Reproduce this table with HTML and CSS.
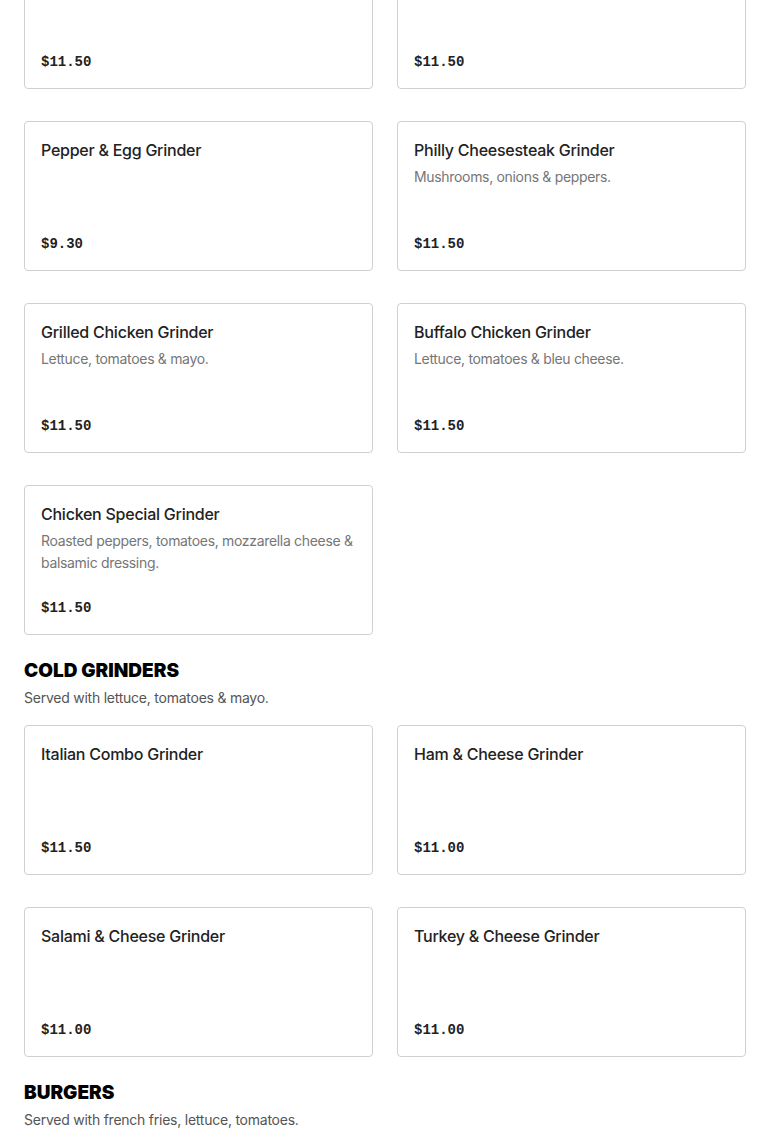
FILE: index.html
```html
<!DOCTYPE html>
<html>
<head>
<meta charset="utf-8">
<link rel="stylesheet" href="styles.css">
</head>
<body>
<div class="menu">
  <div class="grid first">
    <div class="card"><div class="price">$11.50</div></div>
    <div class="card"><div class="price">$11.50</div></div>
    <div class="card"><div class="name">Pepper &amp; Egg Grinder</div><div class="price">$9.30</div></div>
    <div class="card"><div class="name">Philly Cheesesteak Grinder</div><div class="desc">Mushrooms, onions &amp; peppers.</div><div class="price">$11.50</div></div>
    <div class="card"><div class="name">Grilled Chicken Grinder</div><div class="desc">Lettuce, tomatoes &amp; mayo.</div><div class="price">$11.50</div></div>
    <div class="card"><div class="name">Buffalo Chicken Grinder</div><div class="desc">Lettuce, tomatoes &amp; bleu cheese.</div><div class="price">$11.50</div></div>
    <div class="card"><div class="name">Chicken Special Grinder</div><div class="desc">Roasted peppers, tomatoes, mozzarella cheese &amp; balsamic dressing.</div><div class="price">$11.50</div></div>
  </div>
  <h2 class="section-title">COLD GRINDERS</h2>
  <p class="section-sub">Served with lettuce, tomatoes &amp; mayo.</p>
  <div class="grid">
    <div class="card"><div class="name">Italian Combo Grinder</div><div class="price">$11.50</div></div>
    <div class="card"><div class="name">Ham &amp; Cheese Grinder</div><div class="price">$11.00</div></div>
    <div class="card"><div class="name">Salami &amp; Cheese Grinder</div><div class="price">$11.00</div></div>
    <div class="card"><div class="name">Turkey &amp; Cheese Grinder</div><div class="price">$11.00</div></div>
  </div>
  <h2 class="section-title">BURGERS</h2>
  <p class="section-sub">Served with french fries, lettuce, tomatoes.</p>
</div>
</body>
</html>
```
FILE: styles.css
```css
html, body { margin: 0; padding: 0; background: #fff; }
body { font-family: Inter, "Noto Sans", sans-serif; color: #222; overflow: hidden; }
.menu { padding: 0 24px; }
.grid {
  display: grid;
  grid-template-columns: 1fr 1fr;
  column-gap: 24px;
  row-gap: 32px;
}
.grid.first { margin-top: -61px; }
.card {
  box-sizing: border-box;
  min-height: 150px;
  border: 1px solid #d0d0d0;
  border-radius: 4px;
  padding: 16px;
  display: flex;
  flex-direction: column;
}
.name {
  font-size: 16px;
  line-height: 24px;
  font-weight: 500;
  color: #222;
  letter-spacing: -0.25px;
}
.desc {
  margin-top: 4px;
  font-size: 14px;
  line-height: 22px;
  color: #767676;
  letter-spacing: -0.32px;
}
.price {
  margin-top: auto;
  padding-top: 24px;
  font-family: "Liberation Mono", monospace;
  font-weight: 700;
  font-size: 14px;
  line-height: 20px;
  color: #222;
}
.section-title {
  margin: 24px 0 0;
  font-size: 19px;
  line-height: 24px;
  font-weight: 900;
  color: #000;
}
.section-sub {
  margin: 4px 0 16px;
  font-size: 14px;
  line-height: 22px;
  color: #555;
  letter-spacing: -0.24px;
}
```
